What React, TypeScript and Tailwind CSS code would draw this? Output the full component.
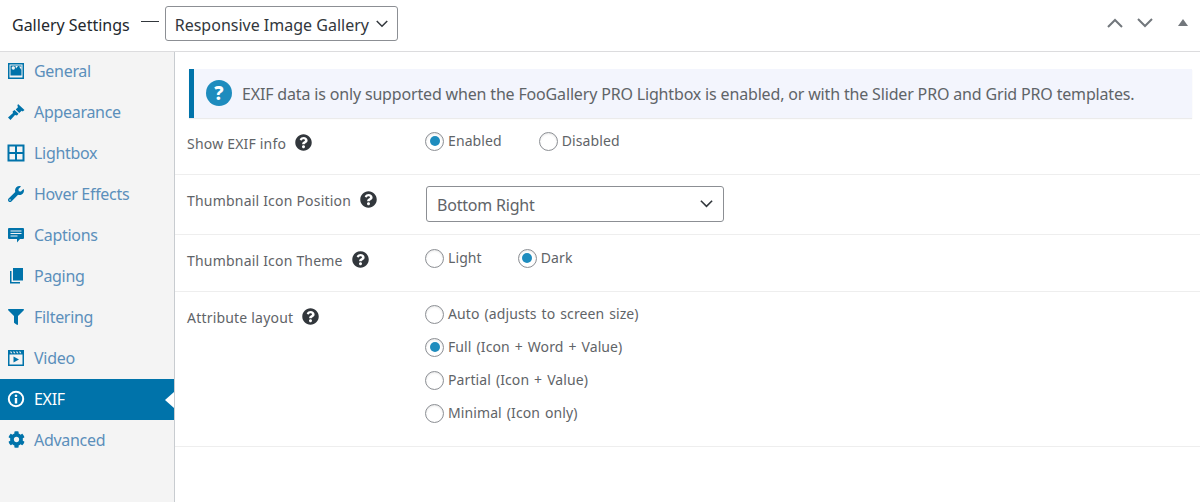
import { FaCog, FaFilter, FaQuestionCircle, FaWrench } from "react-icons/fa";
import type { ReactNode } from "react";

const font = { fontFamily: '"Noto Sans", sans-serif' };

const ImageIcon = () => (
  <svg viewBox="0 0 18 18" className="w-[18px] h-[18px]" fill="currentColor">
    <path fillRule="evenodd" d="M1 1h16v16H1zM2.500 2.500v13h13v-13z" />
    <path d="M3.500 3.500h11v10h-11z" />
    <circle cx="6.300" cy="6" r="1.700" fill="#f4f4f4" />
    <path d="M12 4.500l2.500 0v3.500z" fill="#f4f4f4" />
    <path d="M8.500 4h2.500L9 6.500z" fill="#f4f4f4" />
  </svg>
);
const BrushIcon = () => (
  <svg viewBox="0 0 18 18" className="w-[18px] h-[18px]" fill="currentColor">
    <path d="M11 1l6.500 6-1.800 1.500-1-.8-2.500 2.200-3.500-3.300 2.400-2.500-.8-1.200z" />
    <path d="M7.500 7l4 3.800-1.500 1.700-2-.5-4.500 5L1 14.500l5-4.500-.4-1.500z" />
  </svg>
);
const GridIcon = () => (
  <svg viewBox="0 0 18 18" className="w-[18px] h-[18px]" fill="none" stroke="currentColor" strokeWidth="2">
    <rect x="1.500" y="1.500" width="15" height="15" />
    <path d="M9 1.500v15M1.500 9h15" />
  </svg>
);
const CaptionIcon = () => (
  <svg viewBox="0 0 18 18" className="w-[18px] h-[18px]" fill="currentColor">
    <path fillRule="evenodd" d="M2 2h14a1 1 0 0 1 1 1v9a1 1 0 0 1-1 1h-3l-3 3.500V13H2a1 1 0 0 1-1-1V3a1 1 0 0 1 1-1zM3.500 4.500v1h11v-1zM3.500 7v1h11V7zM3.500 9.500v1h7v-1z" />
  </svg>
);
const PageIcon = () => (
  <svg viewBox="0 0 18 18" className="w-[18px] h-[18px]" fill="currentColor">
    <path d="M6 1h10v12.500H6z" />
    <path d="M4.500 4H3v12.500h10V15H4.500z" />
  </svg>
);
const VideoIcon = () => (
  <svg viewBox="0 0 18 18" className="w-[18px] h-[18px]" fill="currentColor">
    <path fillRule="evenodd" d="M1 1h16v16H1zM2.500 5.500v10h13v-10zM3 2.500l1 1.800h1.300l-1-1.800zM6 2.500l1 1.800h1.300l-1-1.800zM9 2.500l1 1.800h1.300l-1-1.800zM12 2.500l1 1.800h1.300l-1-1.800z" />
    <path d="M6.500 7.500v6l5.500-3z" />
  </svg>
);
const InfoIcon = () => (
  <svg viewBox="0 0 18 18" className="w-[18px] h-[18px]" fill="currentColor">
    <path fillRule="evenodd" d="M9 .8a8.200 8.200 0 1 1 0 16.400A8.200 8.200 0 0 1 9 .8zm0 2a6.200 6.200 0 1 0 0 12.400A6.200 6.200 0 0 0 9 2.800z" />
    <circle cx="9" cy="5.700" r="1.300" />
    <path d="M7.800 8h2.400v5.500H7.800z" />
  </svg>
);

// flat chevron used by the header and the selects
const Chevron = ({ up, className }: { up?: boolean; className: string }) => (
  <svg viewBox="0 0 16 10" className={className} fill="none" stroke="currentColor" strokeWidth="2">
    <path d={up ? "M1 9l7-7 7 7" : "M1 1l7 7 7-7"} />
  </svg>
);

const menu: { label: string; icon: ReactNode; active?: boolean }[] = [
  { label: "General", icon: <ImageIcon /> },
  { label: "Appearance", icon: <BrushIcon /> },
  { label: "Lightbox", icon: <GridIcon /> },
  { label: "Hover Effects", icon: <FaWrench className="w-4 h-4" /> },
  { label: "Captions", icon: <CaptionIcon /> },
  { label: "Paging", icon: <PageIcon /> },
  { label: "Filtering", icon: <FaFilter className="w-4 h-4" /> },
  { label: "Video", icon: <VideoIcon /> },
  { label: "EXIF", icon: <InfoIcon />, active: true },
  { label: "Advanced", icon: <FaCog className="w-[17px] h-[17px]" /> },
];

const Radio = ({ label, checked }: { label: string; checked?: boolean }) => (
  <span className="flex items-center gap-[4px]">
    <span className="w-[19px] h-[19px] rounded-full border border-[#8c8f94] bg-white flex items-center justify-center shadow-[inset_0_1px_2px_rgba(0,0,0,0.1)]">
      {checked && <span className="w-[10px] h-[10px] rounded-full bg-[#1e8cbe]" />}
    </span>
    <span className="text-[14px] leading-[20px] text-[#5f6468] tracking-[0.1px] [word-spacing:1.2px]">{label}</span>
  </span>
);

const Label = ({ text }: { text: string }) => (
  <div className="flex items-center gap-[9px] pt-[16px] text-[14px] leading-[20px] text-[#5f6468] tracking-[0.2px]">
    <span>{text}</span>
    <FaQuestionCircle className="w-[17px] h-[17px] text-[#32373c] -translate-y-[2px]" />
  </div>
);

export default function App() {
  return (
    <div className="w-[1200px] h-[502px] bg-white overflow-hidden flex flex-col" style={font}>
      <div className="h-[52px] shrink-0 border-b border-[#dcdcde] flex items-center pl-[12px] pr-[12px] pb-[4px]">
        <span className="text-[16px] text-[#23282d] translate-y-px">Gallery Settings</span>
        <span className="w-[18px] h-px bg-[#32373c] ml-[11px] mr-[6px] -translate-y-[2px]" />
        <span className="w-[233px] h-[35px] border border-[#8c8f94] rounded-[3px] flex items-center justify-between pl-[9px] pr-[9px] text-[16px] text-[#32373c]">
          <span className="translate-y-px">Responsive Image Gallery</span>
          <Chevron className="w-[12px] h-[8px]" />
        </span>
        <span className="ml-auto flex items-center text-[#72777c] -translate-y-px">
          <Chevron up className="w-[16px] h-[10px]" />
          <Chevron className="w-[16px] h-[10px] ml-[14px]" />
          <span className="ml-[25px] w-0 h-0 border-x-[5px] border-x-transparent border-b-[7px] border-b-[#72777c]" />
        </span>
      </div>
      <div className="flex-1 flex">
        <div className="w-[175px] shrink-0 bg-[#f4f4f4] border-r border-[#c8ccd0]">
          <div className="-mt-px">
            {menu.map((m) => (
              <div
                key={m.label}
                className={`relative h-[41px] flex items-center pl-[7px] pb-[2px] gap-[9px] text-[16px] tracking-[-0.3px] ${
                  m.active ? "bg-[#0073aa] text-white" : "text-[#0073aa]"
                }`}
              >
                <span className="w-[18px] flex justify-center">{m.icon}</span>
                <span className={m.active ? "text-white" : "text-[#5b8fbb]"}>{m.label}</span>
                {m.active && (
                  <span className="absolute right-0 top-[13px] w-0 h-0 border-y-[8px] border-y-transparent border-r-[9px] border-r-white" />
                )}
              </div>
            ))}
          </div>
        </div>
        <div className="flex-1 flex flex-col pt-[17px]">
          <div className="ml-[14px] mr-[8px] h-[49px] border-l-[5px] border-[#0073aa] bg-[#f3f5fd] flex items-center pl-[12px] gap-[10px] shadow-[0_1px_1px_rgba(0,0,0,0.08)]">
            <svg viewBox="0 0 26 26" className="w-[26px] h-[26px] -translate-y-[1px]">
              <circle cx="13" cy="13" r="13" fill="#1e8cbe" />
              <text x="13" y="19.500" textAnchor="middle" fontSize="19" fontWeight="800" fill="#fff" fontFamily="Noto Sans">?</text>
            </svg>
            <span className="text-[16px] text-[#5f6468] tracking-[-0.165px]">
              EXIF data is only supported when the FooGallery PRO Lightbox is enabled, or with the Slider PRO and Grid PRO templates.
            </span>
          </div>
          <div className="h-[57px] border-b border-[#eeeeee] flex pl-[12px]">
            <div className="w-[238px]"><Label text="Show EXIF info" /></div>
            <div className="flex gap-[37px] pt-[13px] h-fit">
              <Radio label="Enabled" checked />
              <Radio label="Disabled" />
            </div>
          </div>
          <div className="h-[60px] border-b border-[#eeeeee] flex pl-[12px]">
            <div className="w-[239px]"><Label text="Thumbnail Icon Position" /></div>
            <div className="mt-[11px] w-[298px] h-[36px] border border-[#8c8f94] rounded-[3px] flex items-center justify-between pl-[10px] pr-[10px] text-[16px] text-[#5f6468] tracking-[-0.2px]">
              <span className="translate-y-px">Bottom Right</span>
              <Chevron className="w-[13px] h-[8px] text-[#32373c]" />
            </div>
          </div>
          <div className="h-[57px] border-b border-[#eeeeee] flex pl-[12px]">
            <div className="w-[238px]"><Label text="Thumbnail Icon Theme" /></div>
            <div className="flex gap-[36px] pt-[13px] h-fit">
              <Radio label="Light" />
              <Radio label="Dark" checked />
            </div>
          </div>
          <div className="h-[155px] border-b border-[#eeeeee] flex pl-[12px]">
            <div className="w-[238px]"><Label text="Attribute layout" /></div>
            <div className="flex flex-col gap-[13px] pt-[12px] h-fit">
              <Radio label="Auto (adjusts to screen size)" />
              <Radio label="Full (Icon + Word + Value)" checked />
              <Radio label="Partial (Icon + Value)" />
              <Radio label="Minimal (Icon only)" />
            </div>
          </div>
        </div>
      </div>
    </div>
  );
}
